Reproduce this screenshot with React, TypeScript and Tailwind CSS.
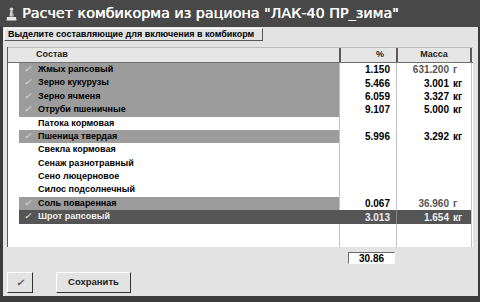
import React from 'react';

type Row = {
  name: string;
  sel?: 1 | 2;
  pct?: string;
  mass?: string;
  unit?: string;
};

const rows: Row[] = [
  { name: 'Жмых рапсовый', sel: 1, pct: '1.150', mass: '631.200', unit: 'г' },
  { name: 'Зерно кукурузы', sel: 1, pct: '5.466', mass: '3.001', unit: 'кг' },
  { name: 'Зерно ячменя', sel: 1, pct: '6.059', mass: '3.327', unit: 'кг' },
  { name: 'Отруби пшеничные', sel: 1, pct: '9.107', mass: '5.000', unit: 'кг' },
  { name: 'Патока кормовая' },
  { name: 'Пшеница твердая', sel: 1, pct: '5.996', mass: '3.292', unit: 'кг' },
  { name: 'Свекла кормовая' },
  { name: 'Сенаж разнотравный' },
  { name: 'Сено люцерновое' },
  { name: 'Силос подсолнечный' },
  { name: 'Соль поваренная', sel: 1, pct: '0.067', mass: '36.960', unit: 'г' },
  { name: 'Шрот рапсовый', sel: 2, pct: '3.013', mass: '1.654', unit: 'кг' },
];

function TitleIcon() {
  return (
    <svg width="11" height="14" viewBox="0 0 11 14" className="shrink-0">
      <circle cx="5.5" cy="2.2" r="1.8" fill="#d8d8d8" />
      <path d="M4.3 4 L6.7 4 L7.6 9.5 L3.4 9.5 Z" fill="#cfcfcf" />
      <path d="M1 10 L10 10 L10.5 13.5 L0.5 13.5 Z" fill="#e6e6e6" />
      <path d="M6.2 4.5 L7.4 9.5" stroke="#8a8a8a" strokeWidth="0.8" />
    </svg>
  );
}

export default function App() {
  return (
    <div
      className="w-[480px] h-[302px] flex flex-col bg-[#3c3c3c] overflow-hidden"
      style={{ fontFamily: '"Liberation Sans", Arial, sans-serif' }}
    >
      {/* Title bar */}
      <div className="h-[27px] shrink-0 flex items-center pl-[6px] gap-[5px] bg-[#484848]">
        <TitleIcon />
        <span
          className="text-white text-[14.3px] whitespace-nowrap leading-none"
          style={{ fontFamily: '"DejaVu Sans", Verdana, sans-serif', textShadow: '0.4px 0 0 #fff' }}
        >
          Расчет комбикорма из рациона "ЛАК-40 ПР_зима"
        </span>
      </div>

      {/* Window body */}
      <div className="flex-1 flex pl-[3px] pr-[2px] pb-[6px]">
        <div className="flex-1 flex flex-col bg-[#e3e3e3]">
          {/* Label */}
          <div className="mt-[1px] ml-[1px] w-[259px] h-[13px] flex items-center pl-[3px] border border-t-white border-l-white border-r-[#555] border-b-[#555] text-[9px] font-bold text-black whitespace-nowrap">
            Выделите составляющие для включения в комбикорм
          </div>

          {/* Grid */}
          <div className="mt-[6px] ml-[4px] w-[466px] h-[200px] flex flex-col bg-white border-l border-[#5a5a5a] text-[9px] font-bold">
            {/* Header */}
            <div className="h-[16px] shrink-0 flex bg-[#e6e6e6] border-t border-[#bdbdbd] border-b border-b-[#707070]">
              <div className="w-[331px] pl-[28px] flex items-center text-[#222]">Состав</div>
              <div className="w-[57px] flex items-center justify-end pr-[12px] border-l-2 border-[#5a5a5a] text-[#222]">%</div>
              <div className="w-[76px] flex items-center justify-center border-l-2 border-[#5a5a5a] border-r-2 border-r-[#5a5a5a] text-[#222]">Масса</div>
            </div>

            {/* Rows */}
            {rows.map((r) => {
              const dark = r.sel === 2;
              const gray = r.sel === 1;
              return (
                <div key={r.name} className="h-[13.4px] shrink-0 flex">
                  <div className="w-[11px] bg-white" />
                  <div
                    className={
                      'w-[320px] flex items-center ' +
                      (dark ? 'bg-[#555555] text-[#f0f0f0]' : gray ? 'bg-[#9c9c9c] text-black' : 'bg-white text-black')
                    }
                  >
                    <span className={'w-[19px] pl-[5px] text-[9px] italic ' + (dark ? 'text-[#d0d0d0]' : 'text-[#cfcfcf]')}>
                      {r.sel ? '✓' : ''}
                    </span>
                    <span className="whitespace-nowrap">{r.name}</span>
                  </div>
                  <div
                    className={
                      'w-[57px] flex items-center justify-end pr-[6px] text-[10px] border-l ' +
                      (dark ? 'bg-[#555555] text-[#eeeeee] border-[#555555]' : 'bg-white text-black border-[#c4c4c4]')
                    }
                  >
                    {r.pct}
                  </div>
                  <div
                    className={
                      'w-[76px] flex items-center justify-end text-[10px] border-l border-r ' +
                      (dark
                        ? 'bg-[#555555] text-[#eeeeee] border-l-[#8a8a8a] border-r-[#c4c4c4]'
                        : 'bg-white border-[#c4c4c4] ' + (r.unit === 'г' ? 'text-[#555]' : 'text-black'))
                    }
                  >
                    {r.mass && (
                      <>
                        <span>{r.mass}</span>
                        <span className="w-[22px] pl-[4px] text-left">{r.unit}</span>
                      </>
                    )}
                  </div>
                </div>
              );
            })}

            {/* Empty space below rows */}
            <div className="flex-1 flex">
              <div className="w-[331px]" />
              <div className="w-[57px] border-l border-[#c4c4c4]" />
              <div className="w-[76px] border-l border-r border-[#c4c4c4]" />
            </div>
          </div>

          {/* Total */}
          <div className="mt-[5px] ml-[345px] w-[47px] h-[12px] flex items-center justify-center bg-white border border-t-[#6a6a6a] border-l-[#6a6a6a] border-r-white border-b-white text-[10px] font-bold text-black">
            30.86
          </div>

          {/* Buttons */}
          <div className="mt-[8px] pl-[4px] flex items-start">
            <button className="w-[26px] h-[21px] flex items-center justify-center bg-[#e3e3e3] border border-t-white border-l-white border-r-[#333] border-b-[#333] text-[#555] text-[10px] italic font-bold">
              ✓
            </button>
            <button className="ml-[23px] w-[75px] h-[21px] flex items-center justify-center bg-[#e3e3e3] border border-t-white border-l-white border-r-[#333] border-b-[#333] text-[9.5px] font-bold text-[#222]">
              Сохранить
            </button>
          </div>
        </div>
      </div>
    </div>
  );
}
